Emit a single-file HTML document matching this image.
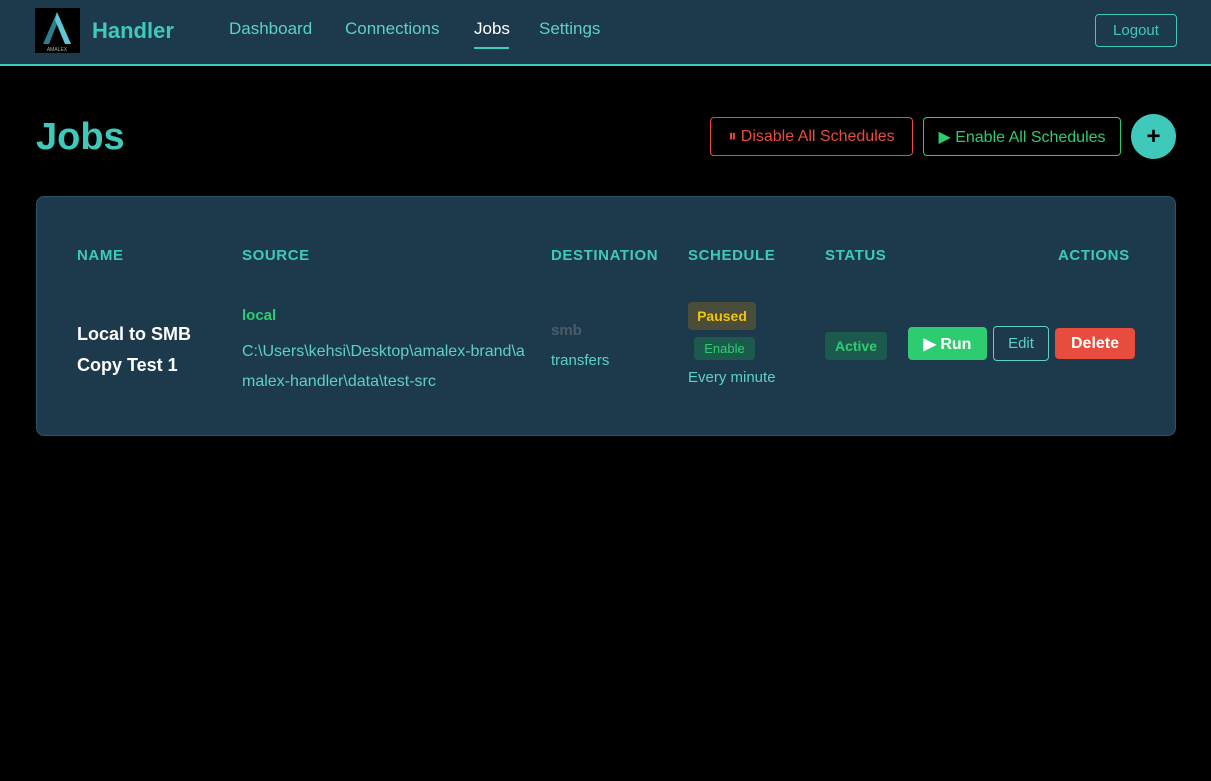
<!DOCTYPE html>
<html><head><style>
*{box-sizing:border-box;margin:0;padding:0}
body{width:1211px;height:781px;background:#000;font-family:"Liberation Sans",sans-serif;position:relative;overflow:hidden}
.nav{position:absolute;left:0;top:0;width:1211px;height:66px;background:#1c3a4c;border-bottom:2px solid #3fc9bb}
.abs{position:absolute;white-space:nowrap}
.link{font-size:17px;color:#5fd0c4;top:19px}
.btn{position:absolute;border-radius:4px;font-size:15px;display:flex;align-items:center;justify-content:center}
.th{font-size:15px;font-weight:bold;letter-spacing:0.6px;color:#3fc9bb;top:247px}
.card{position:absolute;left:36px;top:196px;width:1140px;height:240px;background:#1c3a4c;border:1px solid #2e5365;border-radius:8px}
</style></head><body>
<div class="nav">
 <div class="abs" style="left:35px;top:8px;width:45px;height:45px;background:#000">
  <svg width="45" height="45"><polygon points="22,4 8,36 14,36 22,16" fill="#2e7d8c"/><polygon points="22,4 36,36 30,36 20,12" fill="#5fc8d6"/><text x="22" y="43" font-size="5" fill="#aaa" text-anchor="middle" font-family="Liberation Sans">AMALEX</text></svg>
 </div>
 <div class="abs" style="left:92px;top:18px;font-size:22px;font-weight:bold;color:#3fc9bb">Handler</div>
 <div class="abs link" style="left:229px">Dashboard</div>
 <div class="abs link" style="left:345px">Connections</div>
 <div class="abs link" style="left:474px;color:#fff">Jobs</div>
 <div class="abs" style="left:474px;top:47px;width:35px;height:2px;background:#3fc9bb"></div>
 <div class="abs link" style="left:539px">Settings</div>
 <div class="btn" style="left:1095px;top:14px;width:82px;height:33px;border:1px solid #3fc9bb;color:#3fc9bb">Logout</div>
</div>
<div class="abs" style="left:36px;top:116px;font-size:38px;font-weight:bold;color:#3fc9bb">Jobs</div>
<div class="btn" style="left:710px;top:117px;width:203px;height:39px;border:1px solid #e74c3c;color:#e74c3c;font-size:16px">⏸ Disable All Schedules</div>
<div class="btn" style="left:923px;top:117px;width:198px;height:39px;border:1px solid #2ecc71;color:#2ecc71;font-size:16px">▶ Enable All Schedules</div>
<div class="btn" style="left:1131px;top:114px;width:45px;height:45px;border-radius:50%;background:#3fc9bb;color:#000;font-size:24px;font-weight:bold">+</div>
<div class="card"></div>
<div class="abs th" style="left:77px">NAME</div>
<div class="abs th" style="left:242px">SOURCE</div>
<div class="abs th" style="left:551px">DESTINATION</div>
<div class="abs th" style="left:688px">SCHEDULE</div>
<div class="abs th" style="left:825px">STATUS</div>
<div class="abs th" style="left:1058px">ACTIONS</div>
<div class="abs" style="left:77px;top:319px;font-size:18px;font-weight:bold;color:#fff;line-height:31px">Local to SMB<br>Copy Test 1</div>
<div class="abs" style="left:242px;top:307px;font-size:15px;font-weight:bold;color:#2ecc71">local</div>
<div class="abs" style="left:242px;top:337px;font-size:16px;color:#5fd0c4;line-height:30px">C:\Users\kehsi\Desktop\amalex-brand\a<br>malex-handler\data\test-src</div>
<div class="abs" style="left:551px;top:322px;font-size:15px;font-weight:bold;color:#4a5c66">smb</div>
<div class="abs" style="left:551px;top:352px;font-size:15px;color:#5fd0c4">transfers</div>
<div class="btn" style="left:688px;top:302px;width:68px;height:28px;background:#4a4d3a;color:#f1c40f;font-weight:bold;font-size:14px">Paused</div>
<div class="btn" style="left:694px;top:337px;width:61px;height:23px;background:#1d5a4e;color:#2ecc71;font-size:13px">Enable</div>
<div class="abs" style="left:688px;top:369px;font-size:15px;color:#5fd0c4">Every minute</div>
<div class="btn" style="left:825px;top:332px;width:62px;height:28px;background:#1d5a4e;color:#2ecc71;font-weight:bold;font-size:14px">Active</div>
<div class="btn" style="left:908px;top:327px;width:79px;height:33px;background:#2ecc71;color:#fff;font-weight:bold;font-size:16px">▶ Run</div>
<div class="btn" style="left:993px;top:326px;width:56px;height:35px;border:1px solid #5fd0c4;color:#5fd0c4">Edit</div>
<div class="btn" style="left:1055px;top:328px;width:80px;height:31px;background:#e74c3c;color:#fff;font-weight:bold;font-size:16px">Delete</div>
</body></html>
